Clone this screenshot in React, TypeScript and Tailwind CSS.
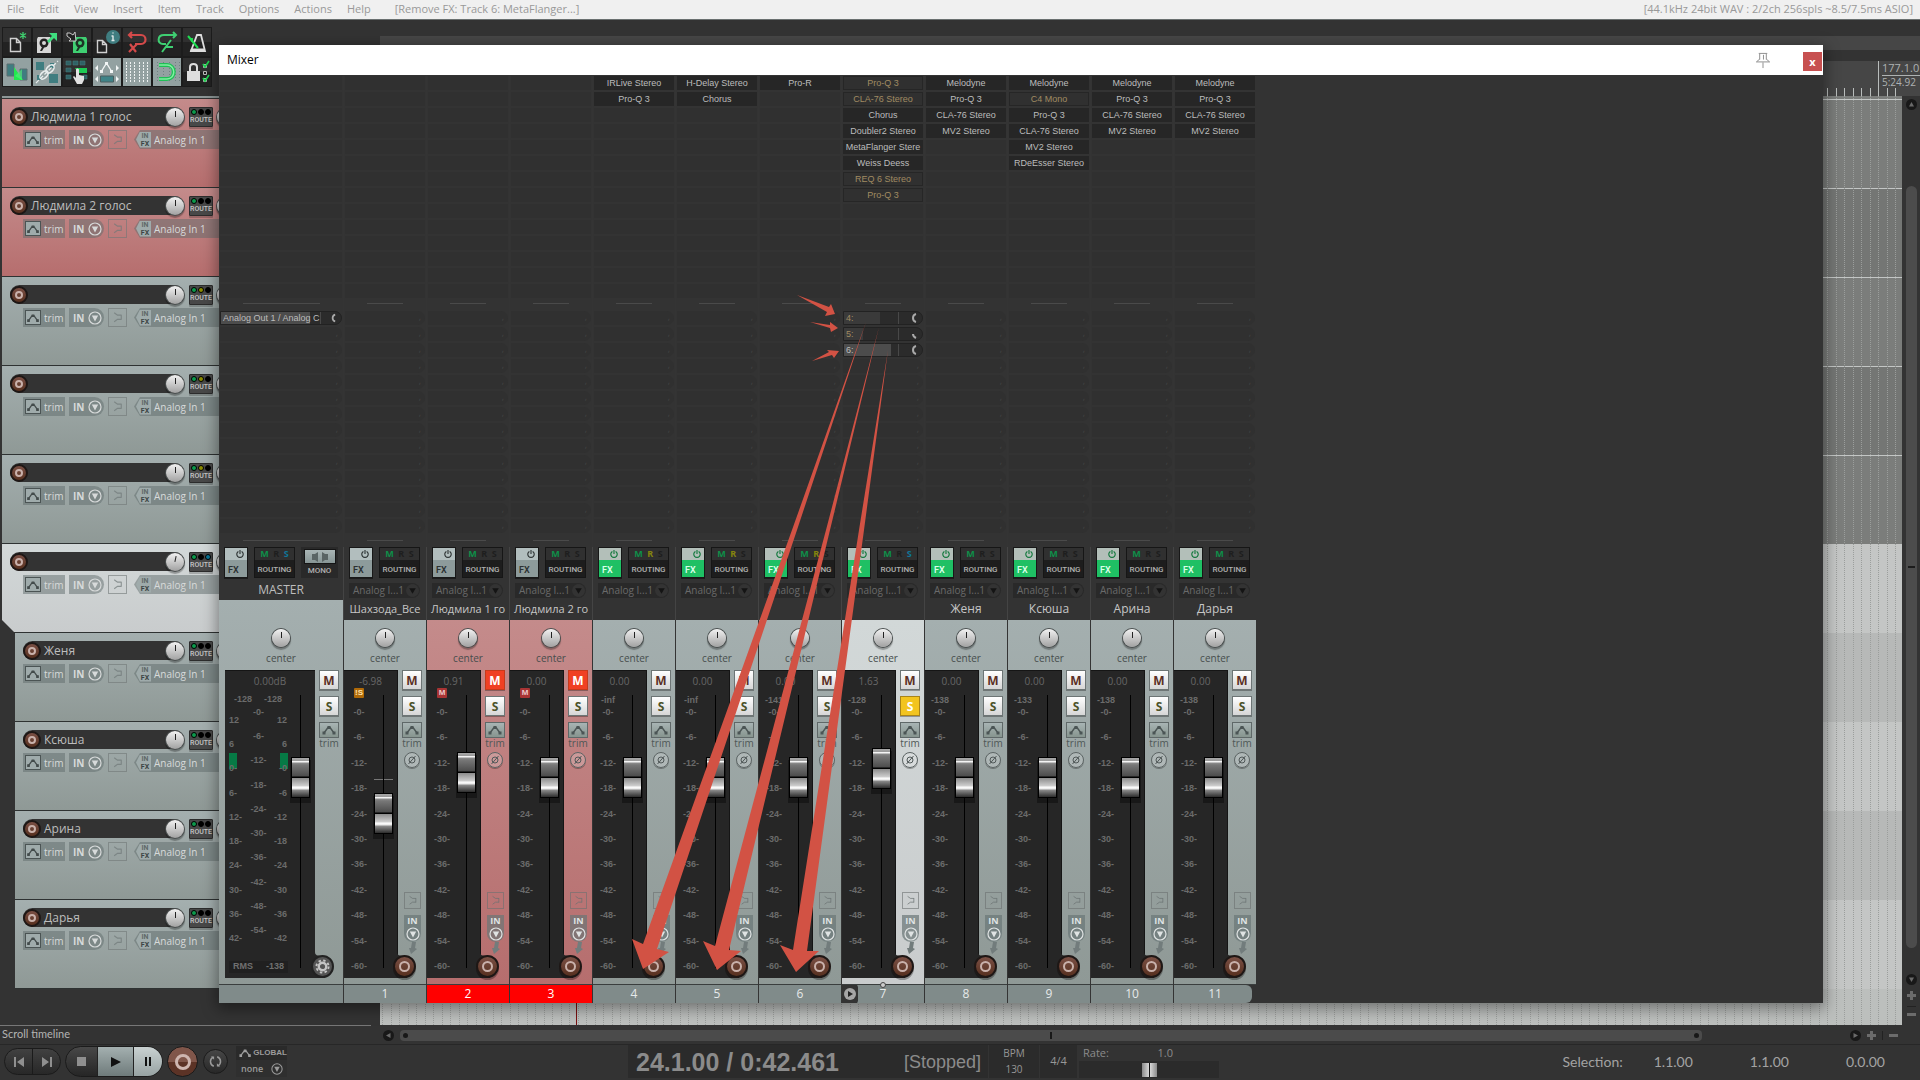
import type { ReactNode } from 'react';
import clsx from 'clsx';

type Tone = 'gray' | 'red' | 'light';

interface Track {
  name: string;
  tone: Tone;
  child?: boolean;
  leds: [string, string];
}

interface Slot {
  label: string;
  bypassed?: boolean;
}

interface Send {
  label: string;
  level: number;
  muted?: boolean;
  quiet?: boolean;
}

interface Channel {
  num: number;
  name: string;
  tone: Tone;
  fx: Slot[];
  sends?: Send[];
  volume: string;
  peak?: string;
  badge?: 'M' | '!S';
  fader: number;
  mute?: boolean;
  solo?: boolean;
  receive?: boolean;
  send?: boolean;
}

const tracks: Track[] = [
  { name: 'Людмила 1 голос', tone: 'red', leds: ['#000000', '#000000'] },
  { name: 'Людмила 2 голос', tone: 'red', leds: ['#000000', '#000000'] },
  { name: '', tone: 'gray', leds: ['#8c8c00', '#000000'] },
  { name: '', tone: 'gray', leds: ['#8c8c00', '#000000'] },
  { name: '', tone: 'gray', leds: ['#8c8c00', '#000000'] },
  { name: '', tone: 'light', leds: ['#000000', '#0a7596'] },
  { name: 'Женя', tone: 'gray', child: true, leds: ['#000000', '#000000'] },
  { name: 'Ксюша', tone: 'gray', child: true, leds: ['#000000', '#000000'] },
  { name: 'Арина', tone: 'gray', child: true, leds: ['#000000', '#000000'] },
  { name: 'Дарья', tone: 'gray', child: true, leds: ['#000000', '#000000'] },
];

const s = (label: string, bypassed = false): Slot => ({ label, bypassed });

// strip names are cut to what fits the strip
const channels: Channel[] = [
  { num: 1, name: 'Шахзода_Все', tone: 'gray', fx: [], volume: '-6.98', badge: '!S', fader: 134 },
  { num: 2, name: 'Людмила 1 го', tone: 'red', fx: [], volume: '0.91', badge: 'M', fader: 175, mute: true },
  { num: 3, name: 'Людмила 2 го', tone: 'red', fx: [], volume: '0.00', badge: 'M', fader: 170, mute: true },
  { num: 4, name: '', tone: 'gray', fx: [s('IRLive Stereo'), s('Pro-Q 3')], volume: '0.00', peak: '-inf', fader: 170, receive: true },
  { num: 5, name: '', tone: 'gray', fx: [s('H-Delay Stereo'), s('Chorus')], volume: '0.00', peak: '-inf', fader: 170, receive: true },
  { num: 6, name: '', tone: 'gray', fx: [s('Pro-R')], volume: '0.00', peak: '-141', fader: 170, receive: true },
  {
    num: 7,
    name: '',
    tone: 'light',
    fx: [s('Pro-Q 3', true), s('CLA-76 Stereo', true), s('Chorus'), s('Doubler2 Stereo'), s('MetaFlanger Stere'), s('Weiss Deess'), s('REQ 6 Stereo', true), s('Pro-Q 3', true)],
    sends: [
      { label: '4:', level: 66, muted: true },
      { label: '5:', level: 36, muted: true, quiet: true },
      { label: '6:', level: 87 },
    ],
    volume: '1.63',
    peak: '-128',
    fader: 179,
    solo: true,
    send: true,
  },
  { num: 8, name: 'Женя', tone: 'gray', fx: [s('Melodyne'), s('Pro-Q 3'), s('CLA-76 Stereo'), s('MV2 Stereo')], volume: '0.00', peak: '-138', fader: 170 },
  { num: 9, name: 'Ксюша', tone: 'gray', fx: [s('Melodyne'), s('C4 Mono', true), s('Pro-Q 3'), s('CLA-76 Stereo'), s('MV2 Stereo'), s('RDeEsser Stereo')], volume: '0.00', peak: '-133', fader: 170 },
  { num: 10, name: 'Арина', tone: 'gray', fx: [s('Melodyne'), s('Pro-Q 3'), s('CLA-76 Stereo'), s('MV2 Stereo')], volume: '0.00', peak: '-138', fader: 170 },
  { num: 11, name: 'Дарья', tone: 'gray', fx: [s('Melodyne'), s('Pro-Q 3'), s('CLA-76 Stereo'), s('MV2 Stereo')], volume: '0.00', peak: '-138', fader: 170 },
];

const ROWS = Array.from({ length: 14 }, (_, i) => i);
const SCALE = ['-0-', '-6-', '-12-', '-18-', '-24-', '-30-', '-36-', '-42-', '-48-', '-54-', '-60-'];
const MASTER_LEFT = ['12', '6', '0-', '6-', '12-', '18-', '24-', '30-', '36-', '42-'];
const MASTER_RIGHT = ['12', '6', '-0', '-6', '-12', '-18', '-24', '-30', '-36', '-42'];
const MENU = ['File', 'Edit', 'View', 'Insert', 'Item', 'Track', 'Options', 'Actions', 'Help'];

const toneBg: Record<Tone, string> = {
  gray: 'bg-linear-to-b from-[#a4afaf] to-[#8f9996]',
  red: 'bg-linear-to-b from-[#c48b8b] to-[#b66e6e]',
  light: 'bg-linear-to-b from-[#d2d8d8] to-[#c9cccd]',
};

/* ---------- small drawings ---------- */

function EnvIcon({ className = '' }: { className?: string }) {
  return (
    <svg viewBox="0 0 14 10" className={clsx('w-[14px] h-[10px]', className)} fill="currentColor" stroke="currentColor">
      <path d="M2 8 L6 2.5 H8 L12 8" fill="none" strokeWidth="1.4" />
      <path d="M0.5 6.5h3v3h-3z M5.5 1h3v3h-3z M10.5 6.5h3v3h-3z" stroke="none" />
    </svg>
  );
}

function PowerIcon() {
  return (
    <svg viewBox="0 0 10 10" className="w-2 h-2" fill="none" stroke="currentColor" strokeWidth="1.4">
      <path d="M3 1.8 A4 4 0 1 0 7 1.8 M5 0 V5" />
    </svg>
  );
}

function DownCircle({ className = 'w-[14px] h-[14px]' }: { className?: string }) {
  return (
    <svg viewBox="0 0 14 14" className={className}>
      <circle cx="7" cy="7" r="6" fill="none" stroke="currentColor" strokeWidth="1.2" />
      <path d="M3.8 4.5 H10.2 L7 10.5 Z" fill="currentColor" />
    </svg>
  );
}

function ForkIcon() {
  return (
    <svg viewBox="0 0 18 18" className="w-full h-full" fill="none" stroke="currentColor" strokeWidth="1.2">
      <path d="M5.500 4 L9 6.500 H13 M13 6 V11.500 M13 11 H9 L5.500 13.500" />
    </svg>
  );
}

function Knob({ turned = false }: { turned?: boolean }) {
  return (
    <span className="flex w-[18px] h-[18px] shrink-0 justify-center rounded-full bg-linear-to-b from-[#f2f2f2] to-[#a2a2a2] shadow-[0_0_0_1px_#4a4f4f,0_2px_1px_1px_rgba(0,0,0,0.3)]">
      <span className={clsx('mt-[3px] h-[6px] w-px bg-[#222]', turned && 'rotate-12')} />
    </span>
  );
}

function RecordDot({ big = false }: { big?: boolean }) {
  return (
    <button
      aria-label="Record arm"
      className={clsx(
        'flex shrink-0 items-center justify-center rounded-full border-2 border-[#1e1715] bg-linear-to-b from-[#7b5045] to-[#57301f]',
        big ? 'w-[23px] h-[23px] shadow-[0_2px_0_rgba(0,0,0,0.3)]' : 'w-[18px] h-[18px]',
      )}
    >
      <span className={clsx('rounded-full border-2 border-[#c9b1ab]', big ? 'w-[11px] h-[11px]' : 'w-2 h-2')} />
    </button>
  );
}

/* ---------- toolbar ---------- */

const disk = 'M1 0h12l1 2v14H0V2z';

const toolIcons: { label: string; on?: boolean; art: ReactNode }[] = [
  {
    label: 'New project',
    art: (
      <>
        <path d="M7.5 10.500h6l4 4v9h-10z M13.500 10.500v4h4" fill="#222" stroke="#d0d0d0" strokeWidth="1.400" />
        <path d="M20 4v7 M17 5.500l6 4 M17 9.500l6-4" stroke="#3fcf6f" strokeWidth="1.300" />
      </>
    ),
  },
  {
    label: 'Open project',
    art: (
      <>
        <g transform="translate(4 9)"><path d={disk} fill="#d6d6d6" /><circle cx="7" cy="6" r="4.500" fill="#222" /><circle cx="7" cy="6" r="2" fill="#d6d6d6" /><path d="M3 14l3-6 2 1-3 5z" fill="#222" /></g>
        <path d="M14 13l5-5-3-3h8v8l-3-3-5 5z" fill="#3fdf7f" />
      </>
    ),
  },
  {
    label: 'Save project',
    art: (
      <>
        <g transform="translate(10 9)"><path d={disk} fill="#3fcf72" /><circle cx="7" cy="6" r="4.500" fill="#1d3325" /><circle cx="7" cy="6" r="2" fill="#3fcf72" /><path d="M3 14l3-6 2 1-3 5z" fill="#1d3325" /></g>
        <path d="M4 5h3l3 2 2-3 1 9H6l2-2-4-3z" fill="#222" stroke="#c8c8c8" />
      </>
    ),
  },
  {
    label: 'Project settings',
    art: (
      <>
        <path d="M4.500 12.500h5l4 4v8h-9z M9.500 12.500v4h4" fill="#222" stroke="#d0d0d0" strokeWidth="1.400" />
        <circle cx="20" cy="9" r="7" fill="#3f7d80" />
        <path d="M20 7.500v5 M18.500 12.500h3 M18.500 8h1.500 M19.500 5h1" stroke="#dfe8e8" strokeWidth="1.400" />
      </>
    ),
  },
  {
    label: 'Undo',
    art: <path d="M6 7h12c6 0 6 9 0 9l-6 0 M9 4L6 7l3 3 M6 24l8-8 M7 16l6 8" stroke="#d44a4a" strokeWidth="2.200" fill="none" />,
  },
  {
    label: 'Redo',
    art: <path d="M23 7H11c-7 0-7 9-1 9h3 M20 4l3 3-3 3 M9 24l9-12 M13 19h7" stroke="#3fcf72" strokeWidth="2" fill="none" />,
  },
  {
    label: 'Metronome',
    art: (
      <>
        <path d="M8 23l6-16h4l4 16z" fill="none" stroke="#dedede" strokeWidth="1.800" />
        <path d="M8 20.500h14v3H7z" fill="#dedede" />
        <path d="M5 8l10 12 M9 10v4" stroke="#1edc50" strokeWidth="2" />
      </>
    ),
  },
  {
    label: 'Auto crossfade',
    on: true,
    art: (
      <>
        <path d="M4 6h7v12H4z M17 11h7v11h-7z" fill="#3f7d80" stroke="#5c6f70" />
        <path d="M11 9l9 13H11z" fill="#22e84f" />
        <path d="M19 11v11l-7-4z" fill="#52f57a" opacity=".6" />
      </>
    ),
  },
  {
    label: 'Item grouping',
    on: true,
    art: (
      <>
        <path d="M3 4h8v8H3z M16 16h9v9h-9z M17 5h4v5h-4z M4 17h4v5H4z" fill="#3f7d80" />
        <path d="M3 25L25 3" stroke="#e9eeee" strokeWidth="1.200" strokeDasharray="4 2" />
        <ellipse cx="11" cy="17" rx="5" ry="3" fill="none" stroke="#e9eeee" strokeWidth="1.500" transform="rotate(-45 11 17)" />
        <ellipse cx="17" cy="11" rx="5" ry="3" fill="none" stroke="#e9eeee" strokeWidth="1.500" transform="rotate(-45 17 11)" />
      </>
    ),
  },
  {
    label: 'Ripple editing',
    art: (
      <>
        <path d="M3 3h5v4H3z M10 3h5v4h-5z M17 3h5v4h-5z M3 10h5v4H3z M3 17h5v4H3z M20 17h4v4h-4z" fill="#2f6265" stroke="#43787b" strokeWidth=".6" />
        <path d="M12 10h12v5H15z" fill="#1ecb55" />
        <path d="M13 12c0-2 3-2 3 0v5l5 1v4l-2 4h-5l-4-7 1-1 2 2z" fill="#e2e2e2" />
      </>
    ),
  },
  {
    label: 'Move envelope points',
    on: true,
    art: (
      <>
        <path d="M8 14l5-8h1l5 8" fill="none" stroke="#f2f5f5" strokeWidth="1.300" />
        <path d="M7 12h3v3H7z M12 4h3v3h-3z M17 12h3v3h-3z M2 10l3-3v6z M26 10l-3-3v6z M2 21l3-3v6z M26 21l-3-3v6z" fill="#f2f5f5" />
        <path d="M7.500 18h13v6h-13z" fill="#3f8387" stroke="#4b5f60" />
      </>
    ),
  },
  {
    label: 'Grid lines',
    on: true,
    art: <path d="M3.500 4v21 M7.500 4v21 M11.500 4v21 M16.500 4v21 M20.500 4v21 M24.500 4v21" stroke="#eef2f2" strokeDasharray="2 1" />,
  },
  {
    label: 'Snap',
    on: true,
    art: (
      <>
        <path d="M4.500 4v21 M10.500 4v21 M16.500 4v21 M22.500 4v21 M26.500 4v21" stroke="#6f8080" strokeDasharray="1 2" />
        <path d="M6 7h8c9 0 9 14 0 14H6" fill="none" stroke="#1fbf55" strokeWidth="4" />
        <path d="M6 7h8c9 0 9 14 0 14H6" fill="none" stroke="#7ff0a0" strokeWidth="1.500" />
      </>
    ),
  },
  {
    label: 'Locking',
    art: (
      <>
        <path d="M4 13h13v10H4z" fill="#dedede" />
        <path d="M7 13V9c0-4 7-4 7 0v4" fill="none" stroke="#dedede" strokeWidth="2" />
        <path d="M20.500 13.500h3v3h-3z M20.500 20.500h3v3h-3z M20.500 6.500h3v3h-3z" fill="none" stroke="#bbb" />
        <path d="M20 6l2 3 4-6 M20 20l2 3 4-6" fill="none" stroke="#1ed850" strokeWidth="1.600" />
      </>
    ),
  },
];

function Toolbar() {
  return (
    <div className="grid w-fit grid-cols-7 gap-[2px] pl-px pt-2">
      {toolIcons.map((t) => (
        <button
          key={t.label}
          aria-label={t.label}
          className={clsx('w-7 h-7 shadow-[0_0_0_1px_#1c1c1c]', t.on ? 'bg-[#93a1a1]' : 'bg-linear-to-b from-[#303030] from-50% to-[#222] to-50%')}
        >
          <svg viewBox="0 0 28 28" className="w-7 h-7" fill="none">{t.art}</svg>
        </button>
      ))}
    </div>
  );
}

/* ---------- track list ---------- */

function TrackPanel({ track }: { track: Track }) {
  return (
    <div
      className={clsx(
        'h-[89px] border-b border-[#2e3232] pt-2',
        toneBg[track.tone],
        track.child ? 'ml-[13px] pl-2' : 'pl-2',
        track.tone === 'light' && '[clip-path:polygon(0_0,100%_0,100%_100%,13px_100%,0_76px)]',
      )}
    >
      <div className="flex h-[19px] items-center">
        <div className={clsx('flex h-[19px] items-center rounded-full bg-[#333]', track.child ? 'w-[161px]' : 'w-[174px]')}>
          <RecordDot />
          <span className="flex-1 truncate pl-[3px] text-[12px] leading-[18px] text-[#bdbdbd]">{track.name}</span>
          <Knob turned={track.tone === 'light'} />
        </div>
        <button className="ml-[5px] mr-1 flex h-5 w-6 shrink-0 flex-col items-center rounded-[1px] border border-[#2c2c2c] bg-[#484848] shadow-[0_2px_0_rgba(0,0,0,0.2)]">
          <span className="flex gap-px pt-px">
            <i className="h-[6px] w-[6px] rounded-full border border-black bg-[#0c9a4c]" />
            {track.leds.map((c, i) => (
              <i key={i} className="h-[6px] w-[6px] rounded-full border border-black" style={{ background: c }} />
            ))}
          </span>
          <span className="font-[Roboto,sans-serif] text-[7px] leading-[11px] font-medium text-[#c6c6c6]">ROUTE</span>
        </button>
        <Knob />
      </div>
      <div className={clsx('mt-1 flex h-[19px] items-center gap-1 text-[#d7dada]', !track.child && 'pl-[13px]')}>
        <button className="flex h-[19px] w-[42px] items-center gap-[3px] bg-[#5f6b6b]/50 pl-[2px]">
          <span className="flex h-[15px] w-4 items-center justify-center border border-[#4b5454] bg-[#9fabab] text-[#434b4b]">
            <EnvIcon className="scale-90" />
          </span>
          <span className="text-[10px] leading-4">trim</span>
        </button>
        <button className="flex h-[19px] w-[35px] items-center justify-between rounded-r-full bg-[#5f6b6b]/50 pl-1 pr-[2px]">
          <span className="text-[10px] font-bold leading-4">IN</span>
          <DownCircle />
        </button>
        <button aria-label="Monitor" className="h-[19px] w-[19px] border border-[#6f7777]/60 text-[#6f7777]/70">
          <ForkIcon />
        </button>
        <button className="ml-[3px] flex h-[19px] flex-1 items-center gap-[3px] bg-[#5f6b6b]/50 pl-[2px] [clip-path:polygon(6px_0,100%_0,100%_100%,6px_100%,0_50%)]">
          <span className="flex h-4 w-[15px] flex-col bg-[#9fabab] pl-[3px] font-[Roboto,sans-serif] text-[7px] leading-2 font-bold text-[#3d4545] [clip-path:polygon(4px_0,100%_0,100%_100%,4px_100%,0_50%)]">
            <span className="text-[#5f6969]">IN</span>
            <span>FX</span>
          </span>
          <span className="text-[10px] leading-4">Analog In 1</span>
        </button>
      </div>
    </div>
  );
}

/* ---------- mixer ---------- */

function EmptySend() {
  return <div className="h-[14px] shrink-0 rounded-r-full bg-[#303030] pr-1 text-right text-[9px] leading-3 text-[#444]">,</div>;
}

function FxList({ fx }: { fx: Slot[] }) {
  return (
    <div className="flex flex-col gap-[2px] px-px pt-px">
      {ROWS.map((i) => {
        const slot = fx[i];
        if (!slot) return <div key={i} className="h-[14px] bg-[#303030]" />;
        return (
          <button
            key={i}
            className={clsx(
              'h-[14px] overflow-hidden border border-[#262626] font-[Liberation_Sans,sans-serif] text-[9px] leading-3 whitespace-nowrap',
              slot.bypassed ? 'bg-[#303030] text-[#a08b62]' : 'bg-[#262626] text-[#bcbcbc]',
            )}
          >
            {slot.label}
          </button>
        );
      })}
    </div>
  );
}

function SendKnob({ quiet }: { quiet?: boolean }) {
  return (
    <svg viewBox="0 0 8 10" className="h-[10px] w-2" fill="none" stroke="#aaa" strokeWidth="2">
      <path d={quiet ? 'M3 5 C3 7 4 8 6 9' : 'M6 1 C2 2 2 8 6 9'} />
    </svg>
  );
}

function SendList({ sends = [] }: { sends?: Send[] }) {
  return (
    <div className="flex flex-col gap-[2px] px-px">
      {ROWS.map((i) => {
        const send = sends[i];
        if (!send) return <EmptySend key={i} />;
        return (
          <button key={i} className="flex h-[14px] items-center rounded-r-full border border-[#222] bg-[#2b2b2b] pr-1">
            <span className="flex h-3 flex-1 border-r border-[#484848]">
              <span
                className={clsx('h-3 pl-[2px] text-left font-[Liberation_Sans,sans-serif] text-[9px] leading-3 whitespace-nowrap', send.muted ? 'bg-[#3a3a3a] text-[#a08b62]' : 'bg-[#4c4c4c] text-[#bcbcbc]')}
                style={{ width: `${send.level}%` }}
              >
                {send.label}
              </span>
            </span>
            <span className="w-[11px]" />
            <SendKnob quiet={send.quiet} />
          </button>
        );
      })}
    </div>
  );
}

function FxButton({ active }: { active: boolean }) {
  return (
    <button
      className={clsx(
        'flex h-[31px] w-6 shrink-0 flex-col border border-[#181818] shadow-[0_1px_0_#1c1c1c]',
        active ? 'bg-[#b3bfb9] text-[#11783c]' : 'bg-[#b2bebe] text-[#2e3434]',
      )}
    >
      <span className="flex h-3 w-full items-center justify-end pr-[3px]"><PowerIcon /></span>
      <span
        className={clsx(
          'w-full flex-1 pl-[3px] pt-1 text-left font-[Roboto,sans-serif] text-[9px] leading-3 font-semibold',
          active ? 'bg-[#1fc064] text-[#d9ffe8]' : 'bg-[#8d9b9b] text-[#2b3131]',
        )}
      >
        FX
      </span>
    </button>
  );
}

function RoutingButton({ receive, send }: { receive?: boolean; send?: boolean }) {
  return (
    <button className="flex h-[31px] w-[41px] shrink-0 flex-col border border-[#161616] bg-[#1d1d1d]">
      <span className="flex h-3 w-full items-center justify-around bg-[#303030] px-[3px] text-[9px] leading-3 font-bold">
        <span className="text-[#0e8f49]">M</span>
        <span className={receive ? 'text-[#85850d]' : 'text-[#1e1e1e]'}>R</span>
        <span className={send ? 'text-[#0f7799]' : 'text-[#1e1e1e]'}>S</span>
      </span>
      <span className="w-full flex-1 pt-1 text-center font-[Roboto,sans-serif] text-[8px] leading-3 font-medium text-[#b0b0b0]">ROUTING</span>
    </button>
  );
}

const faderClass = clsx(
  'block h-[273px] w-[19px] shrink-0 cursor-pointer appearance-none [direction:rtl] [writing-mode:vertical-lr]',
  'bg-[linear-gradient(to_right,transparent_9px,#000_9px,#000_10px,transparent_10px)]',
  '[&::-webkit-slider-thumb]:h-[41px] [&::-webkit-slider-thumb]:w-[19px] [&::-webkit-slider-thumb]:appearance-none',
  '[&::-webkit-slider-thumb]:border [&::-webkit-slider-thumb]:border-black',
  '[&::-webkit-slider-thumb]:shadow-[0_4px_0_1px_rgba(0,0,0,0.35)]',
  '[&::-webkit-slider-thumb]:bg-[linear-gradient(#a8a8a8_0px,#9a9a9a_3px,#f5f5f5_3px,#f5f5f5_4px,#8c8c8c_5px,#777_7px,#4d4d4d_18px,#000_19px,#000_20px,#8c8c8c_20px,#cfcfcf_28px,#fff_29px,#e8e8e8_31px,#8c8c8c_32px,#2d2d2d_39px)]',
);

function MuteSolo({ mute, solo }: { mute?: boolean; solo?: boolean }) {
  const base = 'h-5 w-5 border text-[12px] leading-[17px] font-bold shadow-[0_1px_0_rgba(0,0,0,0.3)]';
  return (
    <>
      <button className={clsx(base, mute ? 'border-[#c43a1c] bg-[#f04023] text-white' : 'border-[#6d7575] bg-linear-to-b from-white to-[#d6d6d6] text-[#5a2f25]')}>M</button>
      <button className={clsx(base, 'mt-[6px]', solo ? 'border-[#a8841a] bg-[#f2c41f] text-white' : 'border-[#6d7575] bg-linear-to-b from-white to-[#d6d6d6] text-[#4c5228]')}>S</button>
      <button aria-label="Envelope" className="mt-[6px] flex h-4 w-5 items-center justify-center border border-[#5f6868] bg-linear-to-b from-[#a8b4b4] to-[#87958f] text-[#4b5555]">
        <EnvIcon />
      </button>
      <span className="text-[10px] leading-[10px] text-[#4f5757]">trim</span>
    </>
  );
}

function PanSection() {
  return (
    <div className="flex flex-col items-center pt-[9px]">
      <Knob />
      <span className="mt-[5px] text-[10px] leading-3 text-[#474d4d]">center</span>
    </div>
  );
}

/* dark lip that carries the meter panel round the record button */
function PanelCorner() {
  return (
    <svg viewBox="0 0 12 26" className="absolute bottom-0 left-full h-[26px] w-3">
      <path d="M0 0 C0 3 2 4 8 4 V26 H0 Z" fill="#262626" />
    </svg>
  );
}

function ScaleColumn({ items, className }: { items: string[]; className: string }) {
  return (
    <div className={clsx('flex flex-col justify-between text-[9px] leading-[10px] font-bold text-[#6b6b6b]', className)}>
      {items.map((v, i) => <span key={i}>{v}</span>)}
    </div>
  );
}

function MasterStrip() {
  return (
    <div className="flex w-[124px] shrink-0 flex-col">
      <FxList fx={[]} />
      <div className="mx-auto mt-[5px] mb-[7px] h-px w-[77px] bg-[#4a4a4a]" />
      <SendList sends={[{ label: 'Analog Out 1 / Analog C', level: 90 }]} />
      <div className="mx-auto mt-[7px] mb-[6px] h-px w-[77px] bg-[#4a4a4a]" />
      <div className="flex h-8 gap-[6px] pl-[5px]">
        <FxButton active={false} />
        <RoutingButton send />
        <button className="flex h-[31px] w-[37px] flex-col items-center bg-[#292929] pt-[2px]">
          <span className="flex h-[15px] w-8 items-center justify-center border border-[#151515] bg-linear-to-b from-[#a9b5b5] to-[#879595]">
            <svg viewBox="0 0 16 10" className="h-[10px] w-4" fill="#5a6464"><path d="M0 2h3l3-2v10L3 8H0z M16 2h-3l-3-2v10l3-2h3z" /></svg>
          </span>
          <span className="font-[Roboto,sans-serif] text-[8px] leading-[13px] font-medium text-[#b0b0b0]">MONO</span>
        </button>
      </div>
      <div className="flex h-[21px] items-center justify-center text-[12px] leading-5 text-[#bdbdbd]">MASTER</div>
      <div className={clsx('flex flex-1 flex-col pb-[6px]', toneBg.gray)}>
        <div className="h-[70px] pt-5"><PanSection /></div>
        <div className="flex flex-1 pl-[6px]">
          <div className="relative flex w-[90px] flex-col border-t border-[#151515] bg-[#262626] font-[Liberation_Sans,sans-serif]">
            <div className="h-[19px] text-center font-[Open_Sans,sans-serif] text-[10px] leading-5 text-[#666]">0.00dB</div>
            <div className="flex flex-1">
              <div className="flex w-[62px] flex-col">
                <div className="flex h-[17px] items-center justify-center gap-3 pl-1 pt-[2px] text-[9px] font-bold text-[#6b6b6b]"><span>-128</span><span>-128</span></div>
                <div className="relative flex pl-1">
                  <span className="absolute left-1 top-[46px] h-4 w-2 bg-[#067a45]" />
                  <span className="absolute right-[-1px] top-[46px] h-4 w-2 bg-[#067a45]" />
                  <ScaleColumn items={MASTER_LEFT} className="relative mt-2 h-[228px] w-5" />
                  <ScaleColumn items={SCALE.slice(0, 10)} className="h-[228px] w-5 text-center" />
                  <ScaleColumn items={MASTER_RIGHT} className="relative mt-2 h-[228px] w-[19px] text-right" />
                </div>
                <div className="ml-1 mt-[18px] flex h-3 w-[59px] items-center justify-between bg-[#202020] px-1 text-[9px] font-bold text-[#707070]">
                  <span>RMS</span>
                  <span>-138</span>
                </div>
              </div>
              <input type="range" aria-label="Master volume" min={0} max={232} defaultValue={170} className={clsx(faderClass, 'ml-1 mt-[5px]')} />
            </div>
            <PanelCorner />
            <button aria-label="Master settings" className="absolute bottom-0 left-[86px] flex h-[23px] w-[23px] items-center justify-center rounded-full border-2 border-[#222] bg-[#555]">
              <svg viewBox="0 0 16 16" className="h-[15px] w-[15px]">
                <circle cx="8" cy="8" r="6.500" fill="none" stroke="#c4c4c4" strokeWidth="2" strokeDasharray="2.600 2.500" />
                <circle cx="8" cy="8" r="4" fill="none" stroke="#c4c4c4" strokeWidth="2.500" />
              </svg>
            </button>
          </div>
          <div className="flex flex-1 flex-col items-start pl-1 [&>span]:w-5 [&>span]:text-center">
            <MuteSolo />
          </div>
        </div>
      </div>
      <div className="h-[19px] border-t border-[#3a3e3e] bg-[#808b8a]" />
    </div>
  );
}

function ChannelStrip({ ch }: { ch: Channel }) {
  const last = ch.num === 11;
  const folder = ch.num === 7;
  return (
    <div className="flex w-[83px] shrink-0 flex-col border-l border-[#343434]">
      <FxList fx={ch.fx} />
      <div className="mx-auto mt-[5px] mb-[7px] h-px w-9 bg-[#4a4a4a]" />
      <SendList sends={ch.sends} />
      <div className="mx-auto mt-[7px] mb-[6px] h-px w-9 bg-[#4a4a4a]" />
      <div className="-ml-px h-[73px] border-l border-[#444]">
        <div className="flex h-9 gap-[6px] pl-[5px]">
          <FxButton active={ch.num > 3} />
          <RoutingButton receive={ch.receive} send={ch.send} />
        </div>
        <button className="ml-[5px] flex h-[15px] w-[71px] items-center justify-between rounded-r-full bg-[#292929] pl-1 text-[10px] leading-[15px] text-[#6a6a6a]">
          <span>Analog I...1</span>
          <svg viewBox="0 0 14 14" className="mr-px h-[13px] w-[13px]"><circle cx="7" cy="7" r="7" fill="#333" /><path d="M3.500 4.500h7L7 10.500z" fill="#141414" /></svg>
        </button>
        <div
          className={clsx(
            'mx-[2px] mt-[2px] h-[18px] text-center leading-[18px] whitespace-nowrap text-[#c6c6c6]',
            ch.name.length > 10 ? 'text-[11px]' : 'text-[12px]',
          )}
        >
          {ch.name}
        </div>
      </div>
      <div className={clsx('relative flex flex-1 flex-col pb-[6px]', toneBg[ch.tone])}>
        <div className="h-[50px]"><PanSection /></div>
        <div className="flex flex-1">
          <div className="relative flex w-[54px] flex-col border-t border-r border-[#151515] bg-[#262626] font-[Liberation_Sans,sans-serif]">
            <div className="h-[19px] text-center font-[Open_Sans,sans-serif] text-[10px] leading-5 text-[#666]">{ch.volume}</div>
            <div className="flex flex-1">
              <div className="w-[30px]">
                <div className="flex h-[17px] justify-center text-[9px] leading-5 font-bold text-[#6b6b6b]">
                  {ch.peak}
                  {ch.badge && (
                    <span className={clsx('-mt-[2px] h-[10px] w-[10px] rounded-[1px] text-center text-[8px] leading-[10px]', ch.badge === 'M' ? 'bg-[#a83434] text-[#ecc9c9]' : 'bg-[#b06a08] text-[#ffe2a8]')}>
                      {ch.badge}
                    </span>
                  )}
                </div>
                <ScaleColumn items={SCALE} className="h-[264px] text-center" />
              </div>
              <div className="relative">
                {ch.num === 1 && <span className="absolute left-0 top-[89px] h-px w-[19px] bg-[#777]" />}
                <input type="range" aria-label={`Track ${ch.num} volume`} min={0} max={232} defaultValue={ch.fader} className={clsx(faderClass, 'relative mt-[5px]')} />
              </div>
            </div>
            <PanelCorner />
            <div className="absolute bottom-0 left-[49px]"><RecordDot big /></div>
          </div>
          <div className="flex flex-1 flex-col items-start pl-1 [&>span]:w-5 [&>span]:text-center">
            <MuteSolo mute={ch.mute} solo={ch.solo} />
            <button aria-label="Phase" className="ml-[2px] mt-1 h-4 w-4 rounded-full border border-[#5c6464] bg-white/20 text-[#505858] shadow-[0_1px_0_rgba(0,0,0,0.3)]">
              <svg viewBox="0 0 14 14" className="h-full w-full" fill="none" stroke="currentColor"><circle cx="7" cy="7" r="3" /><path d="M3.500 11L10.500 3" /></svg>
            </button>
            <div className="mt-auto mb-6 ml-[2px] flex flex-col items-center">
              <button aria-label="Monitor" className="h-[17px] w-[17px] border border-[#6a7070]/60 text-[#6a7070]/70"><ForkIcon /></button>
              <button className="mt-[6px] flex h-[27px] w-[17px] flex-col items-center rounded-b-full bg-[#6a7676]/70 text-[#dfe3e3]">
                <span className="text-[9px] leading-3 font-bold">IN</span>
                <DownCircle />
              </button>
              <svg viewBox="0 0 10 12" className="h-3 w-[10px] text-[#727c7c]" fill="currentColor"><path d="M4 0h4L7 6l2 1-6 5-2-6 2 0z" /></svg>
            </div>
          </div>
        </div>
        {folder && <span className="absolute -bottom-1 left-[38px] z-10 h-[6px] w-[6px] rounded-full border border-[#444] bg-[#ccc]" />}
      </div>
      <div className="flex h-[19px] border-t border-[#3a3e3e] bg-[#333]">
        <div
          className={clsx(
            'relative flex-1 text-center text-[12px] leading-[18px]',
            ch.mute ? 'bg-[#ff0000] text-white' : 'bg-[#808b8a] text-[#e6e9e9]',
            last && 'mr-1 rounded-r-md pl-1',
          )}
        >
          {folder && (
            <span className="absolute left-0 top-0 flex h-[18px] w-4 items-center bg-[#333] [clip-path:ellipse(17px_20px_at_0_9px)]">
              <svg viewBox="0 0 12 12" className="ml-[2px] h-3 w-3"><circle cx="6" cy="6" r="6" fill="#a5a5a5" /><path d="M4 3l5 3-5 3z" fill="#222" /></svg>
            </span>
          )}
          {ch.num}
        </div>
      </div>
    </div>
  );
}

function MixerWindow() {
  return (
    <section className="absolute bottom-[77px] left-[219px] right-[97px] top-[45px] flex flex-col bg-[#333] shadow-[0_4px_14px_2px_rgba(0,0,0,0.4)]">
      <header className="flex h-[30px] shrink-0 items-center bg-white pl-2 pr-px">
        <h1 className="flex-1 text-[12px] leading-4 text-black">Mixer</h1>
        <svg viewBox="0 0 16 18" className="mr-8 h-[17px] w-4" fill="none" stroke="#8a8a8a">
          <path d="M3.500 1.500h9 M4.500 2v6 M11.500 2v6 M8.500 3v5 M4.500 7.500l-3.500 3h14l-3.500-3 M8 11v6" />
        </svg>
        <button aria-label="Close" className="mt-[3px] flex h-[19px] w-[19px] items-center justify-center bg-[#c75050] text-[11px] leading-3 font-bold text-white">x</button>
      </header>
      <div className="flex min-h-0 flex-1">
        <MasterStrip />
        {channels.map((ch) => <ChannelStrip key={ch.num} ch={ch} />)}
      </div>
    </section>
  );
}

/* ---------- arrange view ---------- */

function Arrange() {
  return (
    <div className="relative flex flex-1 flex-col overflow-hidden">
      <div className="h-[3px] shrink-0 bg-[#7b7d7b]" />
      {tracks.map((t, i) => (
        <div
          key={i}
          className={clsx(
            'h-[89px] shrink-0',
            i < 5 ? 'border-t border-[#c3c6c5]' : '',
            i < 5 ? (i % 2 ? 'bg-[#747674]' : 'bg-[#7b7d7b]') : i % 2 ? 'bg-[#c4c6c5]' : 'bg-[#b7b9b8]',
          )}
        />
      ))}
      <div className="flex-1 bg-[#bcbfbd]" />
      <svg className="absolute inset-0 h-full w-full">
        <defs>
          <pattern id="beats" width="17" height="2" patternUnits="userSpaceOnUse">
            <path d="M2 0h1v1H2z M11 0h1v1h-1z" fill="#9b9e9c" />
          </pattern>
        </defs>
        <rect width="100%" height="100%" fill="url(#beats)" />
      </svg>
      <span className="absolute bottom-0 left-[196px] top-0 w-px bg-[#7a1010]" />
    </div>
  );
}

function RoundArrow({ dir }: { dir: 'up' | 'down' | 'left' | 'right' }) {
  const rot = { up: 'rotate-0', right: 'rotate-90', down: 'rotate-180', left: '-rotate-90' };
  return (
    <button aria-label={`Scroll ${dir}`} className="h-[11px] w-[11px] shrink-0">
      <svg viewBox="0 0 11 11" className={clsx('h-[11px] w-[11px]', rot[dir])}><circle cx="5.500" cy="5.500" r="5.500" fill="#181818" /><path d="M3 7.500L5.500 3 8 7.500z" fill="#6a6a6a" /></svg>
    </button>
  );
}

function PlusIcon() {
  return <svg viewBox="0 0 9 9" className="h-[9px] w-[9px]"><path d="M3 0h3v3h3v3H6v3H3V6H0V3h3z" fill="#6c6c6c" /></svg>;
}

/* ---------- transport ---------- */

function Transport() {
  return (
    <footer className="flex h-9 shrink-0 items-center border-t border-[#272727] bg-[#333] pb-[2px]">
      <div className="flex w-[628px] shrink-0 items-center pl-1">
        <div className="flex h-[27px] w-[57px] overflow-hidden rounded-full border border-[#1b1b1b] bg-linear-to-b from-[#414141] to-[#282828] text-[#8f8f8f]">
          <button aria-label="Go to start" className="flex flex-1 items-center justify-center border-r border-[#1b1b1b]">
            <svg viewBox="0 0 10 10" className="h-[10px] w-[10px]" fill="currentColor"><path d="M0 0h2v10H0z M10 0v10L3 5z" /></svg>
          </button>
          <button aria-label="Go to end" className="flex flex-1 items-center justify-center">
            <svg viewBox="0 0 10 10" className="h-[10px] w-[10px]" fill="currentColor"><path d="M8 0h2v10H8z M0 0v10l7-5z" /></svg>
          </button>
        </div>
        <div className="ml-1 flex h-[31px] overflow-hidden rounded-full border border-[#1b1b1b] bg-linear-to-b from-[#484848] to-[#262626]">
          <button aria-label="Stop" className="flex w-[31px] items-center justify-center"><i className="h-[9px] w-[9px] bg-[#8f8f8f]" /></button>
          <button aria-label="Play" className="flex w-[37px] items-center justify-center border-x border-[#222] bg-linear-to-b from-[#a4b0b0] to-[#6f7b7b]">
            <svg viewBox="0 0 10 10" className="h-[10px] w-[10px]"><path d="M0 0l10 5-10 5z" fill="#111" /></svg>
          </button>
          <button aria-label="Pause" className="flex w-7 items-center justify-center gap-[2px] bg-linear-to-b from-[#c9d1d1] to-[#98a3a3]">
            <i className="h-[9px] w-[2px] bg-[#111]" />
            <i className="h-[9px] w-[2px] bg-[#111]" />
          </button>
        </div>
        <button aria-label="Record" className="ml-1 flex h-[31px] w-[31px] items-center justify-center rounded-full border border-[#1b1b1b] bg-linear-to-b from-[#80564a] from-50% to-[#5c3326] to-50%">
          <i className="h-4 w-4 rounded-full border-[3px] border-[#ceb6b0]" />
        </button>
        <button aria-label="Repeat" className="ml-[5px] flex h-[25px] w-[25px] items-center justify-center rounded-full border border-[#1b1b1b] bg-linear-to-b from-[#474747] to-[#282828]">
          <svg viewBox="0 0 14 14" className="h-[13px] w-[13px]" fill="none" stroke="#9a9a9a" strokeWidth="1.600">
            <path d="M4.500 2.200 A5.400 5.400 0 0 0 5.200 12.100 M9.500 11.800 A5.400 5.400 0 0 0 8.800 1.900" />
            <path d="M2 1.500h3.500v3.500z M12 12.500H8.500V9z" fill="#9a9a9a" stroke="none" />
          </svg>
        </button>
        <div className="ml-2 flex h-[31px] w-[51px] flex-col bg-[#2a2a2a] text-[#9c9c9c]">
          <button className="flex h-[14px] items-center gap-[2px] pl-[3px] font-[Liberation_Sans,sans-serif] text-[8px] font-bold">
            <EnvIcon className="h-2 w-3" />
            <span>GLOBAL</span>
          </button>
          <button className="flex h-[17px] items-center justify-between bg-[#2f2f2f] pl-[5px] pr-1 text-[9px] font-semibold">
            <span>none</span>
            <DownCircle className="h-3 w-3" />
          </button>
        </div>
      </div>
      <div className="flex h-[33px] w-[360px] shrink-0 items-center justify-between bg-[#2b2b2b] pl-2 pr-[7px] font-[Liberation_Sans,sans-serif] text-[#8b8b8b]">
        <span className="text-[25px] leading-8 font-bold">24.1.00 / 0:42.461</span>
        <span className="text-[18px] leading-8">[Stopped]</span>
      </div>
      <div className="ml-px flex h-[33px] w-[50px] flex-col items-center bg-[#2b2b2b] text-[10px] leading-4 text-[#979797]">
        <span>BPM</span>
        <span>130</span>
      </div>
      <div className="ml-px flex h-[33px] w-[37px] items-center justify-center bg-[#2b2b2b] text-[11px] text-[#979797]">4/4</div>
      <label className="ml-[2px] flex h-[33px] w-[140px] flex-col text-[11px] leading-4 text-[#8b8b8b]">
        <span className="flex h-4 justify-between pl-1 pr-[46px]"><span>Rate:</span><span>1.0</span></span>
        <input
          type="range"
          min={0}
          max={100}
          defaultValue={50}
          className="h-[17px] w-full appearance-none bg-[#2b2b2b] [&::-webkit-slider-thumb]:h-[14px] [&::-webkit-slider-thumb]:w-[15px] [&::-webkit-slider-thumb]:appearance-none [&::-webkit-slider-thumb]:bg-[linear-gradient(to_right,#8a8a8a,#d8d8d8_7px,#111_7px,#111_8px,#d8d8d8_8px,#8a8a8a)]"
        />
      </label>
      <div className="ml-auto flex items-center pr-[35px] font-[Lato,sans-serif] text-[14px] leading-5 text-[#a3a3a3]">
        <span className="mr-[31px]">Selection:</span>
        <div className="flex gap-[57px]">
          <span>1.1.00</span>
          <span>1.1.00</span>
          <span>0.0.00</span>
        </div>
      </div>
    </footer>
  );
}

/* red pointers from the sends to their receiving tracks */
function Annotations() {
  return (
    <svg className="pointer-events-none absolute left-0 top-0 z-20 h-[1080px] w-[1920px]" viewBox="0 0 1920 1080" fill="#d25244">
      <path d="M866 322 L797 530 L657 949 L669 952 L643 969 L632 939 L643 944 L792 530 Z" />
      <path d="M879 327 L830 530 L729 950 L741 951 L717 970 L703 941 L715 946 L826 530 Z" />
      <path d="M888 350 L864 530 L807 951 L819 951 L796 972 L780 945 L793 950 L859 530 Z" />
      <path d="M797 295 L829 307 L831 304 L835 314 L825 316 L827 312 Z" />
      <path d="M810 322 L830 325 L830 322 L838 328 L831 332 L830 328 Z" />
      <path d="M812 361 L829 352 L827 350 L839 351 L834 358 L832 355 Z" />
    </svg>
  );
}

export default function App() {
  return (
    <div className="relative flex h-screen flex-col overflow-hidden bg-[#333] font-[Open_Sans,sans-serif]">
      <nav className="flex h-5 shrink-0 items-center border-b border-[#6a7070] bg-[#f0f0f0] px-[7px] pb-[2px] text-[11px] leading-4 text-[#999]">
        <div className="flex gap-[15px]">
          {MENU.map((m) => <button key={m}>{m}</button>)}
        </div>
        <span className="ml-6">[Remove FX: Track 6: MetaFlanger...]</span>
        <span className="ml-auto">[44.1kHz 24bit WAV : 2/2ch 256spls ~8.5/7.5ms ASIO]</span>
      </nav>

      <main className="flex min-h-0 flex-1">
        <aside className="w-[380px] shrink-0 pl-[2px]">
          <Toolbar />
          <div className="mt-[10px] h-[3px] border-b border-[#333] bg-[#8d9797]" />
          <div>
            {tracks.map((t, i) => <TrackPanel key={i} track={t} />)}
          </div>
        </aside>
        <div className="flex min-w-0 flex-1 flex-col">
          <div className="mt-4 h-[14px] shrink-0 bg-[#464646]" />
          <div className="mt-[11px] flex h-[35px] shrink-0 justify-end bg-[#464646] text-[#aeb2b2]">
            <svg className="h-full w-[80px] shrink-0 text-[#b9bdbc]">
              <path d="M5.500 27v8 M14.500 27v8 M22.500 27v8 M31.500 27v8 M39.500 27v8 M48.500 27v8 M56.500 0v35 M65.500 27v8 M73.500 27v8" stroke="currentColor" />
            </svg>
            <div className="-ml-5 w-[38px] shrink-0 text-[11px] leading-[14px] whitespace-nowrap">
              <div className="border-b border-[#aeb2b2]">177.1.0</div>
              <div className="text-[10px] leading-[13px]">5:24.92</div>
            </div>
          </div>
          <div className="flex min-h-0 flex-1 pb-[2px]">
            <Arrange />
            <div className="flex w-[18px] shrink-0 flex-col items-center pt-[3px]">
              <RoundArrow dir="up" />
              <div className="mt-[76px] flex w-[11px] flex-1 items-center justify-center rounded-full bg-[#4c4c4c]">
                <i className="h-[2px] w-[7px] bg-[#1c1c1c]" />
              </div>
              <div className="mt-[26px] mb-[9px] flex flex-col items-center gap-[6px]">
                <RoundArrow dir="down" />
                <PlusIcon />
                <i className="h-px w-[9px] bg-[#222]" />
                <i className="h-[3px] w-[9px] bg-[#6c6c6c]" />
              </div>
            </div>
          </div>
        </div>
      </main>

      <div className="flex h-[17px] shrink-0 items-center pr-[22px] pb-px">
        <div className="-mt-1 w-[371px] shrink-0 border-t border-[#777] pl-[2px] font-[Lato,sans-serif] text-[11px] leading-4 text-[#b4b4b4]">Scroll timeline</div>
        <div className="ml-3"><RoundArrow dir="left" /></div>
        <div className="ml-[6px] mr-[148px] flex h-[11px] flex-1 items-center justify-between rounded-[4px] bg-[#4b4b4b] px-[3px]">
          <i className="h-[5px] w-[5px] rounded-full bg-[#181818]" />
          <i className="h-[7px] w-[2px] bg-[#181818]" />
          <i className="h-[5px] w-[5px] rounded-full bg-[#181818]" />
        </div>
        <div className="flex items-center gap-[6px]">
          <RoundArrow dir="right" />
          <PlusIcon />
          <i className="h-[9px] w-px bg-[#222]" />
          <i className="h-[3px] w-[9px] bg-[#6c6c6c]" />
        </div>
      </div>

      <Transport />
      <MixerWindow />
      <Annotations />
    </div>
  );
}
